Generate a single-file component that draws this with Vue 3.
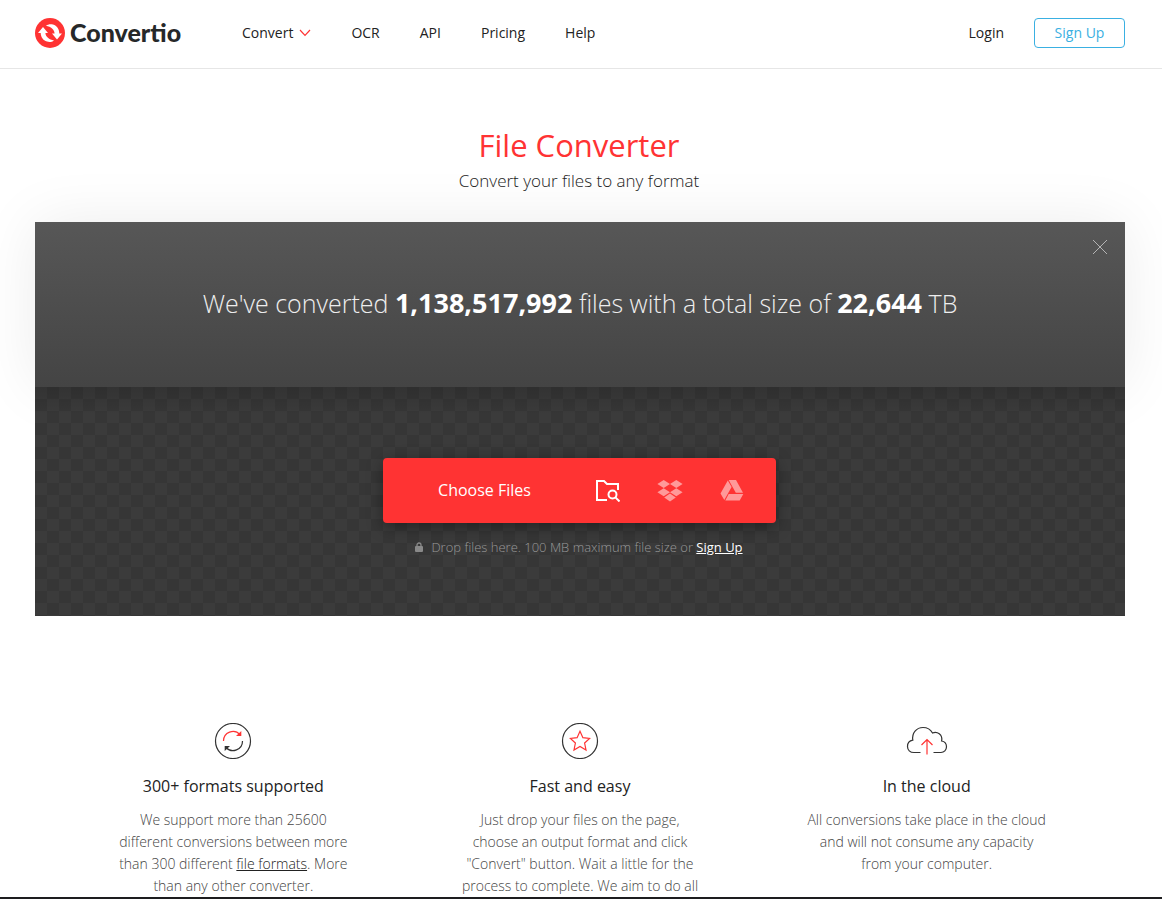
<script setup>
const navItems = ['OCR', 'API', 'Pricing', 'Help']
</script>

<template>
  <div class="page">
    <header class="header">
      <a class="logo" href="#" aria-label="Convertio">
        <svg class="logo-mark" viewBox="0 0 30 30" aria-hidden="true">
          <circle cx="15" cy="15" r="15" fill="#ff3333" />
          <path d="M3 15 L8 9 L13 15 H10.4 C10.7 19 14 21.5 19 22.4 C17 24 14.5 24.3 12 23.6 C8 22.4 5.8 19 5.7 15 Z" fill="#fff" />
          <path d="M27 15.4 L22 21.5 L17 15.4 H19.6 C19.3 11.3 16 8.6 11 7.7 C13 6.1 15.5 5.8 18 6.5 C22 7.7 24.2 11 24.3 15.4 Z" fill="#fff" />
        </svg>
        <span class="logo-text">Convertio</span>
      </a>
      <nav class="nav">
        <a class="dropdown" href="#">Convert
          <svg class="chevron" viewBox="0 0 12 8" aria-hidden="true"><path d="M1 1 L6 6.3 L11 1" fill="none" stroke="#ff3333" stroke-width="1.200" /></svg>
        </a>
        <a v-for="item in navItems" :key="item" href="#">{{ item }}</a>
      </nav>
      <div class="account">
        <a href="#">Login</a>
        <button class="signup" type="button">Sign Up</button>
      </div>
    </header>

    <main>
      <div class="intro">
        <h1>File Converter</h1>
        <h2>Convert your files to any format</h2>
      </div>

      <section class="converter">
        <div class="stats">
          <button class="close" type="button" aria-label="Close">
            <svg viewBox="0 0 14 14" aria-hidden="true"><path d="M0 0 L14 14 M14 0 L0 14" stroke="#b4b4b4" fill="none" /></svg>
          </button>
          <p>We've converted <b>1,138,517,992</b> files with a total size of <b>22,644</b> TB</p>
        </div>
        <div class="dropzone">
          <div class="chooser">
            <button class="choose" type="button">Choose Files</button>
            <button class="source" type="button" aria-label="From computer">
              <svg viewBox="0 0 24 22" fill="none" stroke="#fff" stroke-width="2" aria-hidden="true">
                <path d="M11 20 H1 V1 H8 L11 4 H22 V10" />
                <circle cx="16.500" cy="14.500" r="4" />
                <path d="M19.400 17.400 L23.500 21.500" />
              </svg>
            </button>
            <button class="source" type="button" aria-label="From Dropbox">
              <svg class="wide" viewBox="0 0 26 22" fill="#ff9999" aria-hidden="true">
                <path d="M6.700 0 L13 4 L6.700 8 L0.400 4 Z M19.300 0 L25.600 4 L19.300 8 L13 4 Z M6.700 8.300 L13 12.300 L6.700 16.300 L0.400 12.300 Z M19.300 8.300 L25.600 12.300 L19.300 16.300 L13 12.300 Z M13 13.600 L18.800 17.500 L13 21.500 L7.200 17.500 Z" />
              </svg>
            </button>
            <button class="source" type="button" aria-label="From Google Drive">
              <svg viewBox="0 0 24 22" fill="#ff9999" aria-hidden="true">
                <path d="M7.800 0.500 L11.600 7 L4.300 20 L0.500 13.500 Z M8.700 0 H16 L23 12.700 H15.800 Z M8.700 14 H23.300 L19.700 20.500 H5.300 Z" />
              </svg>
            </button>
          </div>
          <p class="hint">
            <svg class="lock" viewBox="0 0 8 10" aria-hidden="true"><path d="M2 5 V3 A2 2 0 0 1 6 3 V5" fill="none" stroke="#898989" stroke-width="1.300" /><rect y="4" width="8" height="6" rx="1" fill="#898989" /></svg>
            <span>Drop files here. 100 MB maximum file size or <a href="#">Sign Up</a></span>
          </p>
        </div>
      </section>

      <section class="features">
        <article>
          <svg class="icon" viewBox="0 0 42 36" fill="none" aria-hidden="true">
            <circle cx="21" cy="18" r="17.500" stroke="#333" stroke-width="1.200" />
            <path d="M11.500 18 A9.500 9.500 0 0 1 28 11.500" stroke="#ff3333" stroke-width="1.200" />
            <path d="M29.300 8 V13 H24 Z" fill="#ff3333" />
            <path d="M30.500 18 A9.500 9.500 0 0 1 14 24.500" stroke="#333" stroke-width="1.200" />
            <path d="M12.700 28 V23 H18 Z" fill="#333" />
          </svg>
          <h3>300+ formats supported</h3>
          <p>We support more than 25600 different conversions between more than 300 different <a href="#">file formats</a>. More than any other converter.</p>
        </article>
        <article>
          <svg class="icon" viewBox="0 0 42 36" fill="none" aria-hidden="true">
            <circle cx="21" cy="18" r="17.500" stroke="#333" stroke-width="1.200" />
            <path d="M21 8.200 L23.900 14.700 L30.600 15.400 L25.600 20 L27 27 L21 23.500 L15 27 L16.400 20 L11.400 15.400 L18.100 14.700 Z" stroke="#ff3333" stroke-width="1.200" />
          </svg>
          <h3>Fast and easy</h3>
          <p>Just drop your files on the page, choose an output format and click "Convert" button. Wait a little for the process to complete. We aim to do all</p>
        </article>
        <article>
          <svg class="icon" viewBox="0 0 42 36" fill="none" aria-hidden="true">
            <path d="M14.500 29.500 H8 C4 29.500 1.500 27 1.500 23.500 C1.500 20.500 3.500 17.700 6.800 17.200 C5.700 10 10.500 4.500 17 4.500 C21.500 4.500 24.600 6.500 26.500 10 C31 7.800 37 11.500 35.600 18 C39 18.500 40.500 21 40.500 23.800 C40.500 27 38 29.500 35 29.500 H27.500" stroke="#333" stroke-width="1.200" />
            <path d="M21 31.500 V16.500 M15.500 22 L21 16.500 L26.500 22" stroke="#ff3333" stroke-width="1.200" />
          </svg>
          <h3>In the cloud</h3>
          <p>All conversions take place in the cloud and will not consume any capacity from your computer.</p>
        </article>
      </section>
    </main>
  </div>
</template>

<style>
body { margin: 0; background: #fff; }
</style>

<style scoped>
* { box-sizing: border-box; }
.page {
  height: 100vh;
  overflow: hidden;
  border-bottom: 2px solid #1d1d1f;
  font-family: "Open Sans", sans-serif;
  font-size: 14px;
  color: #222;
}
a { color: inherit; text-decoration: none; }
button { font: inherit; padding: 0; border: 0; background: none; cursor: pointer; }
h1, h2, h3, p { margin: 0; font-weight: 300; }
.header {
  height: 69px;
  padding: 0 37px 2px 35px;
  border-bottom: 1px solid #e6e6e6;
  display: flex;
  align-items: center;
}
.logo { display: flex; align-items: center; gap: 5px; width: 207px; }
.logo-mark { width: 30px; height: 30px; }
.logo-text { font-family: Lato, sans-serif; font-weight: 900; font-size: 25px; line-height: 28px; padding-bottom: 2px; color: #262829; }
.nav { display: flex; gap: 40px; flex: 1; padding-bottom: 2px; }
.dropdown { display: flex; align-items: center; gap: 6px; }
.chevron { width: 12px; height: 8px; margin-top: 2px; }
.account { display: flex; align-items: center; gap: 30px; }
.account a { padding-bottom: 2px; }
.signup { width: 91px; height: 30px; padding-bottom: 2px; border: 1px solid #3ab0e2; border-radius: 4px; color: #3ab0e2; }
.intro { text-align: center; padding: 54px 39px 0 35px; height: 153px; }
h1 { font-size: 31px; line-height: 44px; font-weight: 400; color: #ff3333; }
h2 { font-size: 17px; line-height: 28px; }
.converter { margin: 0 37px 0 35px; position: relative; }
.stats {
  position: relative;
  z-index: 1;
  height: 165px;
  padding-bottom: 4px;
  display: flex;
  align-items: center;
  justify-content: center;
  background: linear-gradient(#575757, #444);
  color: #eee;
  font-size: 25px;
  box-shadow: 0 0 60px rgba(0, 0, 0, 0.08);
}
.stats b { color: #fff; font-weight: 700; font-size: 27px; }
.close { position: absolute; top: 18px; right: 18px; width: 14px; height: 14px; }
.close svg { display: block; }
.dropzone {
  position: relative;
  z-index: 2;
  height: 229px;
  padding: 71px 2px 0 0;
  display: flex;
  flex-direction: column;
  align-items: center;
  background:
    linear-gradient(rgba(0, 0, 0, 0.14), transparent 28px),
    repeating-conic-gradient(#363636 0 25%, #3b3b3b 0 50%) 0 0 / 24px 24px;
}
.chooser {
  width: 393px;
  height: 65px;
  padding-right: 13px;
  display: flex;
  align-items: center;
  background: #ff3333;
  border-radius: 4px;
  box-shadow: 0 4px 16px rgba(0, 0, 0, 0.4);
}
.choose { flex: 1; height: 65px; padding: 0 0 2px 10px; color: #fff; font-size: 16px; }
.source { width: 62px; height: 65px; display: flex; align-items: center; justify-content: center; }
.source svg { width: 24px; height: 22px; }
.source .wide { width: 26px; }
.hint { display: flex; align-items: center; gap: 8px; margin-top: 12px; font-size: 13px; line-height: 24px; color: #999; }
.hint a { color: #fff; font-weight: 400; text-decoration: underline; }
.lock { width: 8px; height: 10px; }
.features { padding: 107px 62px 0 60px; display: grid; grid-template-columns: repeat(3, 1fr); text-align: center; }
article { padding: 0 52px; }
.icon { display: block; width: 42px; height: 36px; margin: 0 auto 16px; }
h3 { font-size: 16px; line-height: 22px; font-weight: 400; }
article p { margin-top: 12px; line-height: 22px; color: #444; }
article p a { color: #222; text-decoration: underline; }
</style>
